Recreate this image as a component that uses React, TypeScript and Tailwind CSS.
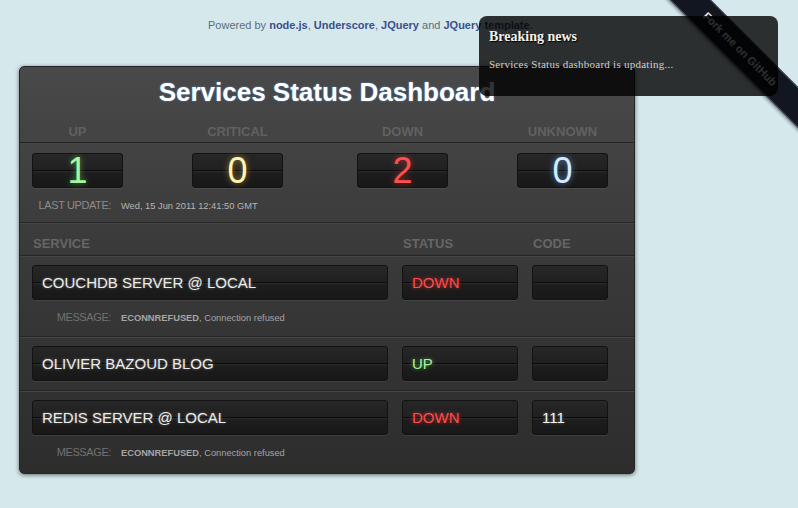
const sans = "font-['Liberation_Sans',Arial,sans-serif]"
const serif = "font-['Liberation_Serif','Times_New_Roman',serif]"

const box =
  "h-[35px] rounded-[3px] border border-[#121212] bg-[linear-gradient(#272727_0,#202020_16px,#0b0b0b_16px,#0b0b0b_17px,#2c2c2c_17px,#1d1d1d_19px,#181818_100%)] shadow-[0_1px_0_rgba(255,255,255,0.07)]"

const counters = [
  { label: "UP", value: "1", cls: "text-[#a8f5a0] [text-shadow:0_0_6px_rgba(120,255,110,0.55)]" },
  { label: "CRITICAL", value: "0", cls: "text-[#fff3b0] [text-shadow:0_0_6px_rgba(255,200,80,0.6)]" },
  { label: "DOWN", value: "2", cls: "text-[#ff5050] [text-shadow:0_0_6px_rgba(255,60,60,0.6)]" },
  { label: "UNKNOWN", value: "0", cls: "text-[#d2ebff] [text-shadow:0_0_6px_rgba(100,170,255,0.75)]" },
]

const services = [
  { name: "COUCHDB SERVER @ LOCAL", status: "DOWN", code: "", message: true },
  { name: "OLIVIER BAZOUD BLOG", status: "UP", code: "", message: false },
  { name: "REDIS SERVER @ LOCAL", status: "DOWN", code: "111", message: true },
]

function Divider() {
  return <div className="border-t border-t-[#252525] border-b border-b-[#454545]" />
}

function Message() {
  return (
    <div className="flex items-baseline mt-[10px] leading-[14px]">
      <span className="w-[91px] text-right text-[11px] tracking-[-0.4px] text-[#727272]">MESSAGE:</span>
      <span className="ml-[10px] text-[9.3px] text-[#a5a5a5]">
        <b>ECONNREFUSED</b>, Connection refused
      </span>
    </div>
  )
}

function Ribbon() {
  return (
    <div className="absolute top-0 right-0 w-[149px] h-[149px] overflow-hidden">
      <div className="absolute left-[-15px] top-[39px] w-[220px] h-[29px] rotate-45 bg-[#121621] border-y border-[#474b57] shadow-[0_2px_3px_rgba(0,0,0,0.4)] flex items-center justify-center pr-[12px]">
        <span className={`${sans} text-[11px] font-bold text-[#e4e4e4]`}>Fork me on GitHub</span>
      </div>
    </div>
  )
}

export default function App() {
  return (
    <div className={`${sans} relative min-h-screen bg-[#d5e8ec] overflow-hidden`}>
      <Ribbon />

      <div className="h-[66px] pt-[18px] pl-[208px] text-[11px] leading-[14px] text-[#5b6e7e]">
        Powered by <b className="text-[#3b4f8e]">node.js</b>, <b className="text-[#3b4f8e]">Underscore</b>,{" "}
        <b className="text-[#3b4f8e]">JQuery</b> and <b className="text-[#3b4f8e]">JQuery template</b>.
      </div>

      <div className="ml-[19px] w-[616px] h-[408px] rounded-[5px] border border-[#262626] bg-[linear-gradient(#494949,#3a3a3a_45%,#2d2d2d)] shadow-[0_1px_4px_rgba(0,0,0,0.55)]">
        <h1 className="mt-[10px] text-center text-[26px] leading-[30px] font-bold text-white [text-shadow:0_0_2px_rgba(90,170,255,0.8)]">
          Services Status Dashboard
        </h1>

        <div className="grid grid-cols-[160px_165px_160px_1fr] pt-[17px] pb-[2px] text-[13px] leading-[16px] font-bold text-[#616161]">
          {counters.map((c) => (
            <div key={c.label} className="ml-[12px] w-[91px] text-center">
              {c.label}
            </div>
          ))}
        </div>
        <Divider />

        <div className="grid grid-cols-[160px_165px_160px_1fr] mt-[9px]">
          {counters.map((c) => (
            <div key={c.label} className={`${box} ml-[12px] w-[91px] flex items-center justify-center`}>
              <span className={`text-[36px] leading-none ${c.cls}`}>{c.value}</span>
            </div>
          ))}
        </div>
        <div className="flex items-baseline mt-[10px] mb-[9px] leading-[14px]">
          <span className="w-[91px] text-right text-[11px] tracking-[-0.4px] text-[#8c8c8c]">LAST UPDATE:</span>
          <span className="ml-[10px] text-[9.3px] text-[#b5b5b5]">Wed, 15 Jun 2011 12:41:50 GMT</span>
        </div>
        <Divider />

        <div className="grid grid-cols-[356px_116px_76px] gap-x-[14px] pl-[13px] pt-[12px] pb-[3px] text-[13px] leading-[16px] font-bold text-[#666]">
          <div>SERVICE</div>
          <div>STATUS</div>
          <div>CODE</div>
        </div>
        <Divider />

        {services.map((s, i) => (
          <div key={s.name}>
            <div className="grid grid-cols-[356px_116px_76px] gap-x-[14px] pl-[12px] mt-[8px] text-[15px] leading-[18px]">
              <div className={`${box} flex items-center pl-[9px] text-[#ececec] [text-shadow:0_0_3px_rgba(255,255,255,0.35)]`}>
                {s.name}
              </div>
              <div
                className={`${box} flex items-center pl-[9px] ${
                  s.status === "UP"
                    ? "text-[#a8f59a] [text-shadow:0_0_4px_rgba(120,255,110,0.6)]"
                    : "text-[#ff4b4b] [text-shadow:0_0_4px_rgba(255,60,60,0.7)]"
                }`}
              >
                {s.status}
              </div>
              <div className={`${box} flex items-center pl-[9px] text-[#f4f4f4] [text-shadow:0_0_3px_rgba(255,255,255,0.4)]`}>
                {s.code}
              </div>
            </div>
            {s.message ? <Message /> : null}
            {i < services.length - 1 ? (
              <div className={s.message ? "mt-[11px]" : "mt-[9px]"}>
                <Divider />
              </div>
            ) : null}
          </div>
        ))}
      </div>

      <div className="absolute top-[16px] right-[20px] w-[299px] h-[80px] rounded-[8px] bg-black/80 px-[10px]">
        <div className={`${serif} pt-[12px] text-[14px] leading-[18px] font-bold text-[#f0f0f0] [text-shadow:1px_1px_1px_#000]`}>
          Breaking news
        </div>
        <div className={`${serif} mt-[11px] text-[11px] leading-[14px] tracking-[0.25px] text-[#cfcfcf]`}>
          Services Status dashboard is updating...
        </div>
      </div>
    </div>
  )
}
